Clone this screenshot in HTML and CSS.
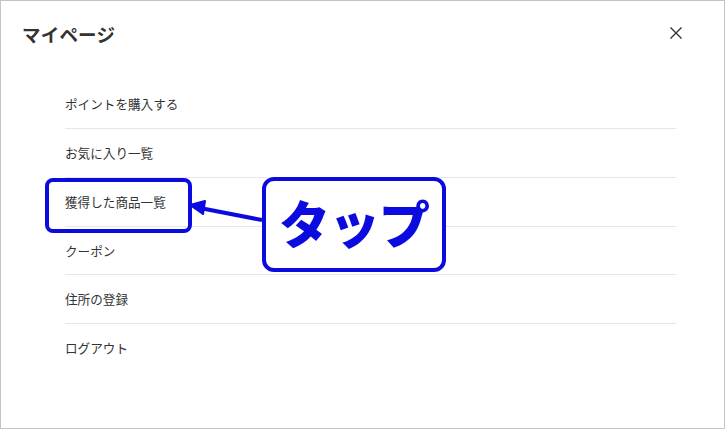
FILE: index.html
```html
<!DOCTYPE html>
<html lang="ja">
<head>
<meta charset="utf-8">
<link rel="stylesheet" href="styles.css">
</head>
<body>
<div class="frame">
  <header class="head">
    <h1 class="title">マイページ</h1>
    <button class="close" aria-label="閉じる">
      <svg width="14" height="14" viewBox="0 0 14 14"><path d="M1.5 1.5 L12.5 12.5 M12.5 1.5 L1.5 12.5" stroke="#333" stroke-width="1.4" fill="none"/></svg>
    </button>
  </header>
  <ul class="menu">
    <li class="item">ポイントを購入する</li>
    <li class="item">お気に入り一覧</li>
    <li class="item">獲得した商品一覧</li>
    <li class="item">クーポン</li>
    <li class="item">住所の登録</li>
    <li class="item last">ログアウト</li>
  </ul>
  <div class="mark mark-item"></div>
  <div class="mark mark-tap"><span class="tap-text">タップ</span></div>
  <svg class="arrow" width="725" height="429" viewBox="0 0 725 429">
    <line x1="262" y1="220" x2="200" y2="208" stroke="#0b0be0" stroke-width="4"/>
    <path d="M190 205 L205 201 L203 214 Z" fill="#0b0be0" stroke="#0b0be0" stroke-width="2" stroke-linejoin="round"/>
  </svg>
</div>
</body>
</html>
```
FILE: styles.css
```css
html, body {
  margin: 0;
  padding: 0;
  background: #fff;
}
.frame {
  position: relative;
  width: 725px;
  height: 429px;
  box-sizing: border-box;
  border: 1px solid #c4c4c4;
  font-family: "Noto Sans CJK JP", "Noto Sans", sans-serif;
  color: #333;
  overflow: hidden;
}
.head {
  height: 79px;
  display: flex;
  justify-content: space-between;
  align-items: flex-start;
  padding: 0 40px 0 21px;
}
.title {
  margin: 18px 0 0 0;
  font-size: 18.5px;
  line-height: 30px;
  font-weight: 600;
  color: #333;
  letter-spacing: 0.2px;
}
.close {
  margin-top: 24px;
  border: 0;
  background: none;
  padding: 0;
  width: 16px;
  height: 16px;
  display: flex;
  align-items: center;
  justify-content: center;
}
.menu {
  list-style: none;
  margin: 0 48px 0 64px;
  padding: 0;
}
.item {
  height: 48px;
  line-height: 47px;
  font-size: 12.6px;
  border-bottom: 1px solid #e6e6e6;
  color: #333;
}
.item:nth-child(4) {
  height: 47px;
}
.item.last {
  border-bottom: 0;
}
.mark {
  position: absolute;
  box-sizing: border-box;
  border: 4px solid #0b0be0;
  background: transparent;
}
.mark-item {
  left: 44px;
  top: 177px;
  width: 147px;
  height: 55px;
  border-radius: 8px;
}
.mark-tap {
  left: 261px;
  top: 176px;
  width: 184px;
  height: 95px;
  border-radius: 12px;
  background: #fff;
  display: flex;
  align-items: center;
  justify-content: center;
}
.tap-text {
  font-family: "Noto Sans CJK JP", sans-serif;
  font-weight: 900;
  font-size: 51px;
  line-height: 1;
  color: #0b0be0;
  letter-spacing: -1px;
  margin-top: -4px;
}
.arrow {
  position: absolute;
  left: -1px;
  top: -1px;
  pointer-events: none;
}
```
